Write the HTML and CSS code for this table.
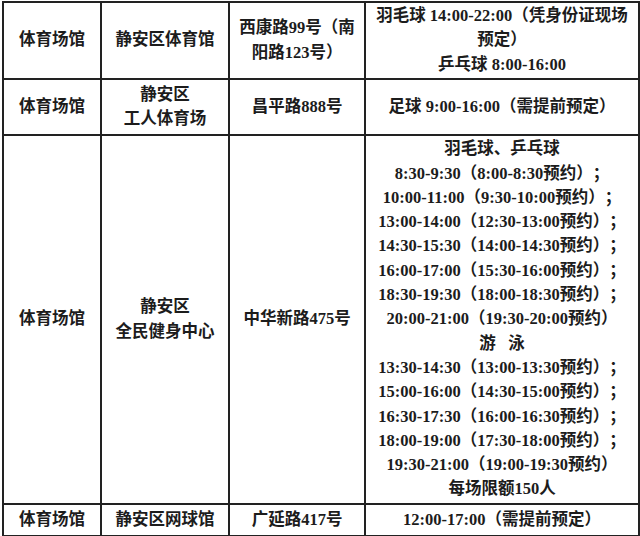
FILE: index.html
```html
<!DOCTYPE html>
<html>
<head>
<meta charset="utf-8">
<title>体育场馆</title>
<link rel="stylesheet" href="styles.css">
</head>
<body>
<table class="venues">
  <colgroup>
    <col class="c1"><col class="c2"><col class="c3"><col class="c4">
  </colgroup>
  <tr class="r1">
    <td>体育场馆</td>
    <td>静安区体育馆</td>
    <td>西康路99号（南<br>阳路123号）</td>
    <td>羽毛球 14:00-22:00（凭身份证现场<br>预定）<br>乒乓球 8:00-16:00</td>
  </tr>
  <tr class="r2">
    <td>体育场馆</td>
    <td>静安区<br>工人体育场</td>
    <td>昌平路888号</td>
    <td>足球 9:00-16:00（需提前预定）</td>
  </tr>
  <tr class="r3">
    <td>体育场馆</td>
    <td>静安区<br>全民健身中心</td>
    <td>中华新路475号</td>
    <td class="list">羽毛球、乒乓球<br>
      8:30-9:30（8:00-8:30预约）；<br>
      10:00-11:00（9:30-10:00预约）；<br>
      13:00-14:00（12:30-13:00预约）；<br>
      14:30-15:30（14:00-14:30预约）；<br>
      16:00-17:00（15:30-16:00预约）；<br>
      18:30-19:30（18:00-18:30预约）；<br>
      20:00-21:00（19:30-20:00预约）<br>
      游&nbsp;&nbsp;&nbsp;泳<br>
      13:30-14:30（13:00-13:30预约）；<br>
      15:00-16:00（14:30-15:00预约）；<br>
      16:30-17:30（16:00-16:30预约）；<br>
      18:00-19:00（17:30-18:00预约）；<br>
      19:30-21:00（19:00-19:30预约）<br>
      每场限额150人</td>
  </tr>
  <tr class="r4">
    <td>体育场馆</td>
    <td>静安区网球馆</td>
    <td>广延路417号</td>
    <td>12:00-17:00（需提前预定）</td>
  </tr>
</table>
</body>
</html>
```

FILE: styles.css
```css
html, body {
  margin: 0;
  padding: 0;
  background: #ffffff;
}
body {
  padding: 1px 0 0 2px;
}
.venues {
  border-collapse: collapse;
  table-layout: fixed;
  width: 636px;
  font-family: "Liberation Serif", "Times New Roman", "Noto Sans CJK SC", serif;
  font-weight: bold;
  font-size: 16.5px;
  line-height: 24.3px;
  color: #1c1c1c;
  text-spacing-trim: space-all;
}
.c1 { width: 98px; }
.c2 { width: 128px; }
.c3 { width: 136px; }
.c4 { width: 274px; }
.venues td {
  border: 2px solid #222222;
  text-align: center;
  vertical-align: middle;
  padding: 0 3px;
}
.r1 { height: 77px; }
.r2 { height: 56px; }
.r2 td { border-top-color: #7a7a7a; }
.r3 { height: 369px; }
.r3 td { border-top-color: #444444; }
.r4 { height: 32px; }
.list { padding-top: 2px; }
```
